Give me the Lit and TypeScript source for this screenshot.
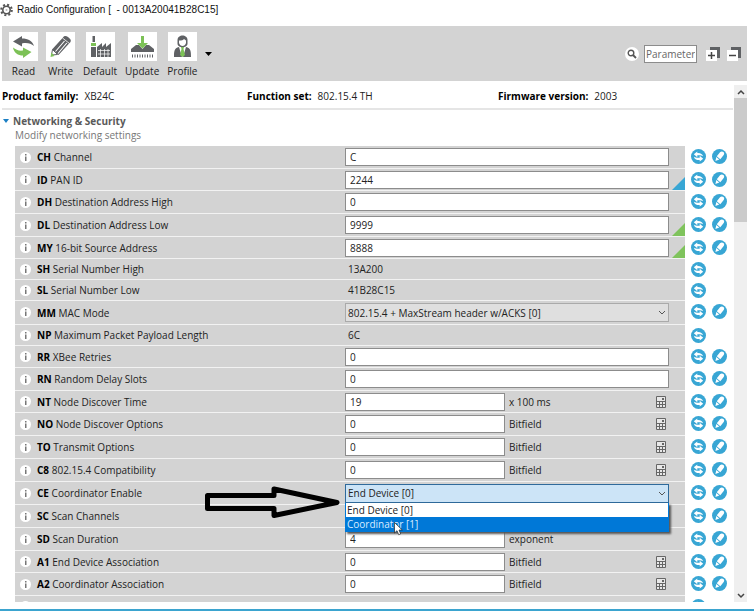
import { LitElement, html, svg, css, nothing } from "lit";
import { customElement, property } from "lit/decorators.js";
import { classMap } from "lit/directives/class-map.js";

type Kind = "text" | "half" | "read" | "select" | "open";

interface Param {
  code: string;
  name: string;
  kind: Kind;
  value: string;
  unit?: string;
  calc?: boolean;
  mark?: "blue" | "green";
  options?: string[];
}

const PARAMS: Param[] = [
  { code: "CH", name: "Channel", kind: "text", value: "C" },
  { code: "ID", name: "PAN ID", kind: "text", value: "2244", mark: "blue" },
  { code: "DH", name: "Destination Address High", kind: "text", value: "0" },
  { code: "DL", name: "Destination Address Low", kind: "text", value: "9999", mark: "green" },
  { code: "MY", name: "16-bit Source Address", kind: "text", value: "8888", mark: "green" },
  { code: "SH", name: "Serial Number High", kind: "read", value: "13A200" },
  { code: "SL", name: "Serial Number Low", kind: "read", value: "41B28C15" },
  { code: "MM", name: "MAC Mode", kind: "select", value: "802.15.4 + MaxStream header w/ACKS [0]" },
  { code: "NP", name: "Maximum Packet Payload Length", kind: "read", value: "6C" },
  { code: "RR", name: "XBee Retries", kind: "text", value: "0" },
  { code: "RN", name: "Random Delay Slots", kind: "text", value: "0" },
  { code: "NT", name: "Node Discover Time", kind: "half", value: "19", unit: "x 100 ms", calc: true },
  { code: "NO", name: "Node Discover Options", kind: "half", value: "0", unit: "Bitfield", calc: true },
  { code: "TO", name: "Transmit Options", kind: "half", value: "0", unit: "Bitfield", calc: true },
  { code: "C8", name: "802.15.4 Compatibility", kind: "half", value: "0", unit: "Bitfield", calc: true },
  {
    code: "CE", name: "Coordinator Enable", kind: "open", value: "End Device [0]",
    options: ["End Device [0]", "Coordinator [1]"],
  },
  { code: "SC", name: "Scan Channels", kind: "half", value: "", unit: "" },
  { code: "SD", name: "Scan Duration", kind: "half", value: "4", unit: "exponent" },
  { code: "A1", name: "End Device Association", kind: "half", value: "0", unit: "Bitfield", calc: true },
  { code: "A2", name: "Coordinator Association", kind: "half", value: "0", unit: "Bitfield", calc: true },
  { code: "", name: "", kind: "read", value: "" },
];

const toolIcons = {
  read: svg`
    <path fill="#5f6164" d="M4 9.500 13 4v2.500c6 0 10 2 12 7.500-3-2.500-7-3.500-12-2.500v3z"/>
    <path fill="#7cc156" d="M22.500 20 14 26v-2.500C9 23.500 5 21 4 15.500c3 2.500 6 3.500 10 3V15.500z"/>`,
  write: svg`
    <path fill="#5f6164" d="M17 5.500c1-2 3-2 5-.500s3.500 3 2.500 5L12.500 23 6 17.500z"/>
    <path stroke="#fff" stroke-width="1.100" d="m18.500 9-9 10.500M20.800 11 12 21.500"/>
    <path stroke="#fff" stroke-width=".8" d="m16.500 6 7 5.500"/>
    <path fill="#fff" stroke="#5f6164" d="M6.500 17.500 5.500 23l6-.500z"/>
    <path fill="#7cc156" d="m5.300 20.500 3.200 3.500L4.500 25z"/>`,
  default: svg`
    <path fill="#5f6164" d="M6.500 4H9v6H6.500zM5 15h5v10H5zM11 25V15l5-4v4l4-4v4l5-4v14z"/>
    <path fill="#7cc156" d="M5 11h5v3H5z"/>
    <path stroke="#fff" d="M12 18.500h12M12 22h12M14.500 17v8M18.500 17v8M22 17v8" stroke-opacity=".7"/>`,
  update: svg`
    <path fill="#5f6164" d="M3 20v-3l5-4h3l3.500 4 3.500-4h3l5 4v3z"/>
    <path fill="#7cc156" d="M13 4h3v7h4l-5.500 5.500L9 11h4z"/>
    <path stroke="#5f6164" stroke-dasharray="1 1.500" stroke-width="3" d="M4 24h22"/>`,
  profile: svg`
    <path fill="#5f6164" d="M9.500 8c0-6 10-6 10 0v3.500c0 5-10 5-10 0z"/>
    <path fill="#fff" d="M11 8.500c3 0 4-.500 5-1.500l2 1.500v2.500c-1 4-6 4-7 0z"/>
    <path fill="#5f6164" d="m11 15 3 10H6c0-5 0-9 5-10zM18 15l-3 10h8c0-5 0-9-5-10z"/>
    <path fill="#7cc156" d="M13 15h3l-.500 2 1.500 6-2.500 2-2.500-2 1.500-6z"/>`,
};

@customElement("round-action")
class RoundAction extends LitElement {
  @property() kind: "refresh" | "edit" = "refresh";
  @property() label = "";

  static styles = css`
    :host { display: block; width: 15px; height: 15px; }
    button { display: block; padding: 0; border: 0; background: none; }
    svg { display: block; }
  `;

  render() {
    return html`<button type="button" aria-label=${this.label}>
      <svg width="15" height="15" viewBox="0 0 15 15">
        <circle cx="7.500" cy="7.500" r="7.500" fill="#38a6d4" />
        ${this.kind === "refresh"
          ? svg`
            <path fill="#fff" d="M2.800 5.200 6.300 2.400v1.500c3.200-.200 5.300 1 5.800 3.400-1.600-.900-3.300-1.200-5.800-1v1.900z"/>
            <path fill="#fff" d="M12.200 9.800 8.700 12.600v-1.500c-3.200.200-5.300-1-5.800-3.400 1.600.900 3.300 1.200 5.800 1V6.800z"/>`
          : svg`
            <path fill="#fff" d="M8 3.300c1.200-1.400 3-.900 3.700 0s.700 2-.200 3L8.300 10.200 4.800 7.300z"/>
            <path fill="#fff" d="m4.300 8 3 2.600-3.900 1.500z"/>`}
      </svg>
    </button>`;
  }
}

@customElement("param-row")
class ParamRow extends LitElement {
  @property({ attribute: false }) param!: Param;

  static styles = css`
    :host { display: flex; font: 10px/14px "Open Sans", "Noto Sans", sans-serif; color: #222; }
    * { box-sizing: border-box; }
    .cell {
      position: relative; flex: 1; min-width: 0;
      display: grid; grid-template-columns: 330px 1fr; align-items: center;
      padding-right: 16px; background: #d3d3d3; border-bottom: 1px solid #f2f2f2;
    }
    .name { display: flex; align-items: center; white-space: nowrap; padding-left: 5px; }
    .info {
      width: 11px; height: 11px; margin-right: 6px; padding: 0; border: 0; background: none; display: block;
    }
    .info svg { display: block; }
    b { color: #000; }
    label { cursor: default; }
    .field { position: relative; display: flex; align-items: center; min-width: 0; }
    input, select {
      appearance: none; width: 100%; height: 18px; margin: 0; padding: 0 4px;
      border: 1px solid #8c8c8c; border-radius: 0; background: #fff; color: #222; font: inherit; outline: 0;
    }
    .half input { width: 160px; }
    select { height: 19px; padding: 0 2px; background: #dfdfdf; border-color: #aaa; }
    .open select { background: #cce4f7; border-color: #2f6a9b; }
    .chevron { position: absolute; right: 3px; top: 7px; pointer-events: none; }
    output { padding-left: 3px; }
    .unit { margin-left: 4px; flex: 1; }
    .calc { padding: 0; border: 0; background: none; margin-right: 3px; }
    .calc svg { display: block; }
    .mark {
      position: absolute; right: 0; bottom: 0; width: 13px; height: 13px;
      clip-path: polygon(100% 0, 100% 100%, 0 100%);
    }
    .mark.blue { background: #38a6d4; }
    .mark.green { background: #7fc35c; }
    .actions { width: 48px; display: flex; gap: 6px; padding: 3px 0 0 6px; }
    .menu {
      position: absolute; z-index: 2; left: 0; right: 0; top: 100%; margin: 0; padding: 0;
      list-style: none; background: #fff; border: 1px solid #0078d7; border-top: 0;
      box-shadow: 2px 2px 2px #555;
    }
    .menu li { padding-left: 1px; line-height: 14px; }
    .menu .active { background: #0078d7; color: #d9ecff; }
    .arrow { position: absolute; z-index: 3; right: calc(100% + 2px); top: 1px; pointer-events: none; }
    .pointer { position: absolute; z-index: 4; left: 49px; top: 38px; pointer-events: none; }
  `;

  private chevron() {
    return html`<svg class="chevron" width="8" height="6" viewBox="0 0 8 6">
      <path d="m1 1 3 3 3-3" fill="none" stroke="#555" />
    </svg>`;
  }

  private field() {
    const p = this.param;
    switch (p.kind) {
      case "read":
        return html`<output id="v">${p.value}</output>`;
      case "select":
        return html`<select id="v"><option>${p.value}</option></select>${this.chevron()}`;
      case "open":
        return html`<select id="v">${p.options!.map((o) => html`<option>${o}</option>`)}</select>
          ${this.chevron()}
          <ul class="menu" role="listbox" aria-label=${p.name}>
            ${p.options!.map(
              (o, i) => html`<li role="option" class=${classMap({ active: i === 1 })}>${o}</li>`
            )}
          </ul>
          <svg class="arrow" width="140" height="34" viewBox="0 0 140 34">
            <path d="M4.500 10.500H71V4L134 17.500 71 30.500V23.500H4.500z" fill="none" stroke="#000"
              stroke-width="5" stroke-linejoin="round" />
          </svg>
          <svg class="pointer" width="10" height="14" viewBox="0 0 10 14">
            <path d="M.5.5v10.500l2.500-2.300 1.700 4 2-.8L5 8h3.300z" fill="#fff" stroke="#222" stroke-width=".7" />
          </svg>`;
      default:
        return html`<input id="v" type="text" .value=${p.value} />
          ${p.kind === "half" ? html`<span class="unit">${p.unit}</span>` : nothing}
          ${p.calc
            ? html`<button class="calc" type="button" aria-label="Calculator">
                <svg width="10" height="12" viewBox="0 0 10 12">
                  <path fill="#e8e8e8" stroke="#666" d="M.5.5h9v11h-9z" />
                  <path fill="#666" d="M6 2h2v2H6zM1 5h8v1H1z" />
                  <path stroke="#666" d="M1 8.500h8M3.500 6v5M6.500 6v5" />
                </svg>
              </button>`
            : nothing}`;
    }
  }

  render() {
    const p = this.param;
    return html`
      <div class="cell">
        <div class="name">
          <button class="info" type="button" aria-label="About ${p.name}">
            <svg width="11" height="11" viewBox="0 0 11 11">
              <circle cx="5.500" cy="5.500" r="5.500" fill="#fff" />
              <path fill="#777" d="M5 2h1.500v1.500H5zM5 4.500h1.500V9H5z" />
            </svg>
          </button>
          <label for="v"><b>${p.code}</b> ${p.name}</label>
        </div>
        <div class="field ${p.kind}">${this.field()}</div>
        ${p.mark ? html`<span class="mark ${p.mark}"></span>` : nothing}
      </div>
      <div class="actions">
        <round-action kind="refresh" label="Read ${p.code}"></round-action>
        ${p.kind === "read"
          ? nothing
          : html`<round-action kind="edit" label="Write ${p.code}"></round-action>`}
      </div>
    `;
  }
}

@customElement("app-root")
class AppRoot extends LitElement {
  static styles = css`
    :host {
      display: flex; flex-direction: column; height: 100vh; overflow: hidden; background: #fff;
      font: 10px/14px "Open Sans", "Noto Sans", sans-serif; color: #222;
    }
    * { box-sizing: border-box; }
    button { padding: 0; border: 0; background: none; font: inherit; color: inherit; }
    svg { display: block; }
    .title {
      display: flex; align-items: center; gap: 4px; height: 20px; margin-bottom: 6px; flex: none;
      font: 10px/14px "Liberation Sans", Arial, sans-serif; color: #111; white-space: pre;
    }
    .title h1 { font: inherit; margin: 0; }
    .bar {
      display: flex; align-items: center; flex: none; height: 55px; margin: 0 7px 4px 2px;
      padding: 0 6px 0 7px; background: #d3d3d3;
    }
    .tools { display: flex; gap: 8px; padding-top: 2px; }
    .tool { display: flex; flex-direction: column; align-items: center; gap: 3px; }
    .tool svg { background: #fff; }
    .more { margin-left: 8px; }
    .search { display: flex; align-items: center; gap: 5px; margin-left: auto; }
    .search input {
      width: 53px; height: 18px; padding: 0 1px; margin: 0; border: 1px solid #8c8c8c; border-radius: 0;
      background: #fff; font: inherit; outline: 0;
    }
    .search input::placeholder { color: #666; opacity: 1; }
    .folds { display: flex; gap: 7px; margin-left: 9px; }
    .body { flex: 1; min-height: 0; display: flex; margin: 0 7px 0 2px; }
    .content { flex: 1; min-width: 0; overflow: hidden; }
    .summary {
      display: grid; grid-template-columns: 245fr 251fr 235fr; align-items: center;
      height: 25px; margin: 0; padding-bottom: 2px; border-bottom: 2px solid #e5e5e5;
    }
    .summary div { display: flex; gap: 6px; white-space: nowrap; }
    dt { font-weight: 700; color: #000; }
    dd { margin: 0; }
    .section { display: flex; gap: 4px; padding: 4px 0; }
    .section button { height: 14px; }
    h2 { margin: 0; font: inherit; font-weight: 700; color: #5a5a5a; }
    p { margin: 0 0 0 2px; color: #777; }
    .rows { margin-left: 13px; }
    .row { height: 23px; }
    .row.read { height: 21px; }
    .row.select { height: 24px; }
    .row:nth-child(2), .row:nth-child(5), .row:nth-child(10), .row:nth-child(12), .row:nth-child(19) {
      height: 22px;
    }
    .scroll { width: 13px; margin-left: 1px; display: flex; flex-direction: column; background: #efefef; }
    .scroll button { height: 13px; display: grid; place-items: center; }
    .thumb { height: 24%; background: #cbcbcb; }
    .scroll .down { margin-top: auto; }
    .foot { flex: none; height: 9px; border-bottom: 2px solid #3ba4cf; margin-bottom: 1px; }
  `;

  private tool(name: keyof typeof toolIcons, label: string) {
    return html`<button class="tool" type="button">
      <svg width="29" height="29" viewBox="0 0 29 29">${toolIcons[name]}</svg>
      <span>${label}</span>
    </button>`;
  }

  private fold(label: string, glyph: string) {
    return html`<button type="button" aria-label=${label}>
      <svg width="14" height="14" viewBox="0 0 14 14">
        <path fill="#5f6164" d="M4 0h10v11H4z" />
        <path fill="#fff" d="M0 3h11v11H0z" />
        <path stroke="#444" stroke-width="1.500" d=${glyph} />
      </svg>
    </button>`;
  }

  render() {
    return html`
      <header class="title"><svg width="13" height="14" viewBox="0 0 13 14">
          <circle cx="6.500" cy="7" r="5.300" fill="none" stroke="#555" stroke-width="2" stroke-dasharray="2 2.160" />
          <circle cx="6.500" cy="7" r="3.700" fill="none" stroke="#555" stroke-width="1.600" />
          <circle cx="6.500" cy="7" r="1" fill="#bbb" />
        </svg><h1>Radio Configuration [  - 0013A20041B28C15]</h1></header>
      <div class="bar">
        <div class="tools">
          ${this.tool("read", "Read")} ${this.tool("write", "Write")} ${this.tool("default", "Default")}
          ${this.tool("update", "Update")} ${this.tool("profile", "Profile")}
        </div>
        <button class="more" type="button" aria-label="More profile actions">
          <svg width="7" height="4" viewBox="0 0 7 4"><path d="M0 0h7L3.500 4z" /></svg>
        </button>
        <div class="search">
          <svg width="14" height="14" viewBox="0 0 14 14">
            <circle cx="7" cy="7" r="7" fill="#fff" />
            <circle cx="6" cy="6" r="2.800" fill="none" stroke="#555" stroke-width="1.400" />
            <path d="m8 8 3 3" stroke="#555" stroke-width="1.800" />
          </svg>
          <input type="text" placeholder="Parameter" aria-label="Parameter" />
        </div>
        <div class="folds">
          ${this.fold("Expand all", "M2 8.500h7M5.500 5v7")} ${this.fold("Collapse all", "M2 8.500h7")}
        </div>
      </div>
      <main class="body">
        <div class="content">
          <dl class="summary">
            <div><dt>Product family:</dt><dd>XB24C</dd></div>
            <div><dt>Function set:</dt><dd>802.15.4 TH</dd></div>
            <div><dt>Firmware version:</dt><dd>2003</dd></div>
          </dl>
          <div class="section">
            <button type="button" aria-label="Collapse section">
              <svg width="7" height="4" viewBox="0 0 7 4"><path fill="#1b7fc4" d="M1 0h6L4 4z" /></svg>
            </button>
            <div>
              <h2>Networking &amp; Security</h2>
              <p>Modify networking settings</p>
            </div>
          </div>
          <div class="rows">
            ${PARAMS.map((p) => html`<param-row class="row ${p.kind}" .param=${p}></param-row>`)}
          </div>
        </div>
        <div class="scroll">
          <button type="button" aria-label="Scroll up">
            <svg width="8" height="6" viewBox="0 0 8 6"><path d="m1 5 3-3 3 3" fill="none" stroke="#444" stroke-width="1.500" /></svg>
          </button>
          <div class="thumb"></div>
          <button class="down" type="button" aria-label="Scroll down">
            <svg width="8" height="6" viewBox="0 0 8 6"><path d="m1 1 3 3 3-3" fill="none" stroke="#444" stroke-width="1.500" /></svg>
          </button>
        </div>
      </main>
      <footer class="foot"></footer>
    `;
  }
}
